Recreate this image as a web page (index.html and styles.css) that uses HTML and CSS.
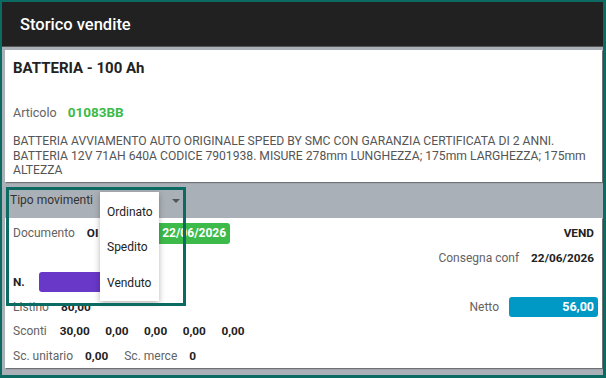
FILE: index.html
```html
<!DOCTYPE html>
<html lang="it">
<head>
<meta charset="utf-8">
<title>Storico vendite</title>
<link rel="stylesheet" href="styles.css">
</head>
<body>
<div class="frame">
  <header class="appbar"><span class="appbar-title">Storico vendite</span></header>
  <main class="content">
    <section class="card card-item">
      <h1 class="item-title">BATTERIA - 100 Ah</h1>
      <div class="item-code"><span class="label label-lg">Articolo</span><span class="code">01083BB</span></div>
      <p class="item-desc">BATTERIA AVVIAMENTO AUTO ORIGINALE SPEED BY SMC CON GARANZIA CERTIFICATA DI 2 ANNI. BATTERIA 12V 71AH 640A CODICE 7901938. MISURE 278mm LUNGHEZZA; 175mm LARGHEZZA; 175mm ALTEZZA</p>
    </section>
    <div class="filter">
      <span class="filter-label">Tipo movimenti</span>
      <span class="filter-arrow"></span>
    </div>
    <section class="card card-move">
      <div class="row">
        <div class="group"><span class="label">Documento</span><span class="value">OI 00012</span><span class="badge badge-green">22/06/2026</span></div>
        <span class="value">VEND</span>
      </div>
      <div class="row row-end">
        <div class="group"><span class="label">Consegna conf</span><span class="value">22/06/2026</span></div>
      </div>
      <div class="row">
        <div class="group"><span class="value">N.</span><span class="bar-purple"></span></div>
      </div>
      <div class="row">
        <div class="group"><span class="label">Listino</span><span class="value">80,00</span></div>
        <div class="group group-netto"><span class="label">Netto</span><span class="badge badge-blue">56,00</span></div>
      </div>
      <div class="row">
        <div class="group group-sconti"><span class="label">Sconti</span><span class="value first">30,00</span><span class="value">0,00</span><span class="value">0,00</span><span class="value">0,00</span><span class="value">0,00</span></div>
      </div>
      <div class="row">
        <div class="group"><span class="label">Sc. unitario</span><span class="value">0,00</span><span class="label label-gap">Sc. merce</span><span class="value">0</span></div>
      </div>
    </section>
  </main>
  <ul class="menu">
    <li>Ordinato</li>
    <li>Spedito</li>
    <li>Venduto</li>
  </ul>
  <div class="highlight"></div>
</div>
</body>
</html>
```

FILE: styles.css
```css
* { box-sizing: border-box; }
html, body { margin: 0; padding: 0; }
body {
  font-family: Roboto, "Noto Sans", "Liberation Sans", sans-serif;
  width: 606px;
  height: 378px;
  overflow: hidden;
}
.frame {
  position: relative;
  width: 606px;
  height: 378px;
  border-style: solid;
  border-color: #0b6a62;
  border-width: 2px 3px 3px 2px;
  background: #aab0b7;
  display: flex;
  flex-direction: column;
}
.appbar {
  height: 45px;
  flex: none;
  background: #212121;
  border-bottom: 1px solid #555;
  display: flex;
  align-items: center;
  padding-left: 18px;
}
.appbar-title {
  color: #fff;
  font-size: 16.5px;
  font-weight: 500;
}
.content {
  flex: 1;
  padding: 3px 0 0 3px;
  display: flex;
  flex-direction: column;
}
.card {
  background: #fff;
  box-shadow: 1px 1px 1px rgba(0,0,0,0.35);
  margin-right: 1px;
}
.card-item {
  height: 132px;
  padding: 10px 8px 0 8px;
}
.item-title {
  margin: 0;
  font-size: 15px;
  font-weight: 700;
  color: #222;
  line-height: 16px;
}
.item-code {
  margin-top: 28px;
  display: flex;
  align-items: center;
  gap: 11px;
  height: 16px;
}
.label {
  font-size: 12px;
  color: #636363;
}
.label-lg { font-size: 12.5px; }
.code {
  font-size: 13.5px;
  font-weight: 700;
  color: #3cba47;
}
.item-desc {
  margin: 14px 0 0 0;
  font-size: 12.15px;
  line-height: 14.5px;
  color: #555;
  padding-right: 2px;
}
.filter {
  height: 36px;
  flex: none;
  display: flex;
  align-items: center;
  padding-left: 5px;
  width: 180px;
  justify-content: space-between;
  padding-right: 5px;
}
.filter-label {
  font-size: 12px;
  color: #333;
}
.filter-arrow {
  width: 0;
  height: 0;
  margin-top: 2px;
  border-left: 4px solid transparent;
  border-right: 4px solid transparent;
  border-top: 4px solid #555;
}
.card-move {
  height: 150px;
  padding: 3px 4px 0 8px;
}
.row {
  height: 24.5px;
  display: flex;
  align-items: center;
  justify-content: space-between;
  padding-right: 4px;
}
.row-end { justify-content: flex-end; }
.group {
  display: flex;
  align-items: center;
  gap: 12px;
}
.group-netto { gap: 10px; margin-right: -4px; }
.group-sconti { gap: 15.5px; }
.group-sconti .first { margin-left: -2.5px; }
.label-gap { margin-left: 4px; }
.value {
  font-size: 11.8px;
  font-weight: 700;
  color: #222;
}
.badge {
  height: 21px;
  border-radius: 3px;
  color: #fff;
  font-weight: 700;
  display: flex;
  align-items: center;
}
.badge-green {
  background: #3dbb4a;
  font-size: 12px;
  padding: 0 4px 0 6px;
  margin-left: 9px;
}
.badge-blue {
  background: #0099c6;
  font-size: 12.5px;
  width: 89px;
  height: 20px;
  justify-content: flex-end;
  padding-right: 4px;
}
.bar-purple {
  width: 95px;
  height: 20px;
  border-radius: 3px;
  background: #6a38c8;
  margin-left: 2px;
}
.menu {
  position: absolute;
  left: 98px;
  top: 190px;
  width: 59px;
  height: 109px;
  margin: 0;
  list-style: none;
  background: #fff;
  box-shadow: 0 2px 6px rgba(0,0,0,0.3);
  display: flex;
  flex-direction: column;
  justify-content: space-around;
  padding: 2px 0 0 7px;
}
.menu li {
  font-size: 12px;
  color: #222;
}
.highlight {
  position: absolute;
  left: 4px;
  top: 185px;
  width: 180px;
  height: 119px;
  border: 3px solid #0b6a62;
}
```
